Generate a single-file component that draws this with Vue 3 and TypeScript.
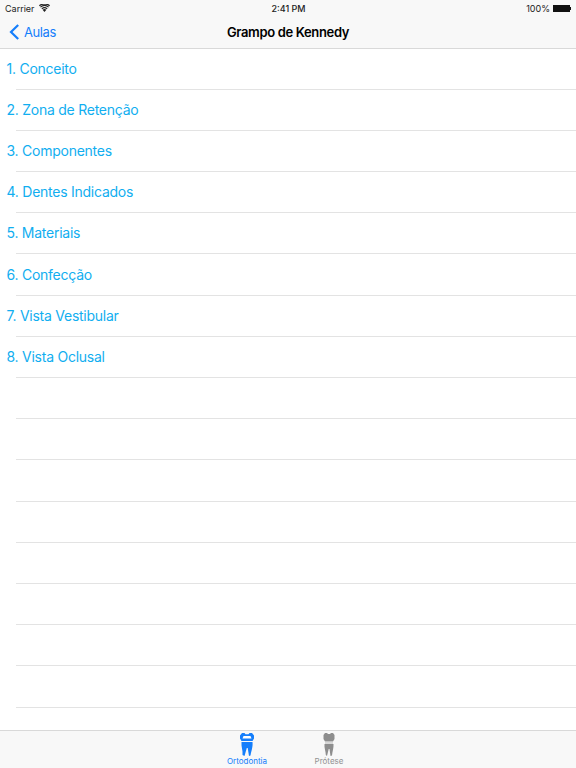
<script setup lang="ts">
const lessons = [
  '1. Conceito',
  '2. Zona de Retenção',
  '3. Componentes',
  '4. Dentes Indicados',
  '5. Materiais',
  '6. Confecção',
  '7. Vista Vestibular',
  '8. Vista Oclusal',
  '', '', '', '', '', '', '', '', ''
]
</script>

<template>
  <div class="screen">
    <header class="top">
      <div class="status">
        <div class="status-left">
          <span>Carrier</span>
          <svg class="wifi" width="11" height="8" viewBox="0 0 11 8">
            <path d="M5.500 8 3.600 5.700a3 3 0 0 1 3.800 0z" fill="#222" />
            <path d="M2.800 4.800a4.200 4.200 0 0 1 5.400 0M1.400 3.100a6.400 6.400 0 0 1 8.200 0M.3 1.700a8.200 8.200 0 0 1 10.400 0" stroke="#222" fill="none" stroke-width="1.100" />
          </svg>
        </div>
        <span class="clock">2:41 PM</span>
        <div class="status-right">
          <span>100%</span>
          <span class="battery"></span>
          <span class="battery-tip"></span>
        </div>
      </div>
      <nav class="navbar">
        <div class="back">
          <svg width="11" height="16" viewBox="0 0 11 16">
            <path d="M9.200 1 2 8l7.200 7" fill="none" stroke="#157efb" stroke-width="2.200" />
          </svg>
          <span>Aulas</span>
        </div>
        <div class="title">Grampo de Kennedy</div>
      </nav>
    </header>

    <ul class="list">
      <li v-for="(item, i) in lessons" :key="i" class="row">
        <span class="row-text">{{ item }}</span>
      </li>
    </ul>

    <footer class="tabs">
      <div class="tab active">
        <svg width="16" height="23" viewBox="0 0 16 23">
          <path d="M3 0h2.500l1 1.200h3L10.500 0H13l2 2.500v3L13.500 8h-11L1 5.500v-3z" fill="#157efb" />
          <path d="M4.500 3h7l1 2.500h-9z" fill="#fff" />
          <path d="M2.500 9h11c.5 5-1 8-2 13.500L10 23 8.700 15H7.800L5.500 23 3.500 22C4 17 2 14 2.500 9z" fill="#157efb" />
        </svg>
        <span>Ortodontia</span>
      </div>
      <div class="tab">
        <svg width="16" height="23" viewBox="0 0 16 23">
          <path d="M4 0h2l1 1h2l1-1h2l1.500 2v4L12 8.500H4L2.500 6V2z" fill="#8e8e8e" />
          <rect x="4" y="9.500" width="8" height="1" fill="#b5b5b5" />
          <path d="M3.500 11h9c.3 4-1 7-1.500 11.500L9.500 23 8.500 16H7.700L6 23 4.800 22C4.800 18 3 15 3.500 11z" fill="#8e8e8e" />
        </svg>
        <span>Prótese</span>
      </div>
    </footer>
  </div>
</template>

<style scoped>
.screen {
  width: 576px;
  height: 768px;
  display: flex;
  flex-direction: column;
  overflow: hidden;
  background: #fff;
  font-family: Inter, "Liberation Sans", sans-serif;
}

.top {
  height: 48.500px;
  box-sizing: border-box;
  flex-shrink: 0;
  background: #f8f8f8;
  border-bottom: 1px solid #d9d9d9;
}

.status {
  height: 16px;
  padding: 0 5px;
  display: flex;
  align-items: center;
  justify-content: space-between;
  position: relative;
  font-size: 9px;
  color: #222;
}

.status-left,
.status-right {
  display: flex;
  align-items: center;
}

.wifi {
  margin-left: 4px;
}

.clock {
  position: absolute;
  left: 1px;
  right: 0;
  text-align: center;
  font-weight: 500;
}

.battery {
  width: 17px;
  height: 7px;
  margin-left: 3px;
  background: #111;
}

.battery-tip {
  width: 1px;
  height: 3px;
  background: #111;
}

.navbar {
  height: 32px;
  display: flex;
  align-items: center;
  justify-content: center;
  position: relative;
}

.back {
  position: absolute;
  left: 9px;
  top: 8px;
  display: flex;
  align-items: center;
  gap: 4px;
  font-size: 13px;
  letter-spacing: -0.4px;
  color: #157efb;
}

.title {
  font-size: 13px;
  font-weight: 600;
  letter-spacing: -0.35px;
  color: #000;
}

.list {
  flex: 1;
  margin: 0;
  padding: 0;
  list-style: none;
  overflow: hidden;
}

.row {
  height: 41.200px;
  box-sizing: border-box;
  padding: 0 0 2px 6.500px;
  display: flex;
  align-items: center;
  position: relative;
}

.row::after {
  content: "";
  position: absolute;
  left: 16px;
  right: 0;
  bottom: 0;
  height: 1px;
  background: #e3e3e3;
}

.row-text {
  font-size: 14px;
  letter-spacing: -0.25px;
  color: #11aef0;
}

.tabs {
  height: 38px;
  flex-shrink: 0;
  box-sizing: border-box;
  background: #f8f8f8;
  border-top: 1px solid #d9d9d9;
  display: flex;
  justify-content: center;
  gap: 41px;
  padding-top: 2px;
}

.tab {
  width: 41px;
  display: flex;
  flex-direction: column;
  align-items: center;
  font-size: 8px;
  line-height: 11px;
  color: #929292;
}

.tab.active {
  color: #157efb;
}
</style>
